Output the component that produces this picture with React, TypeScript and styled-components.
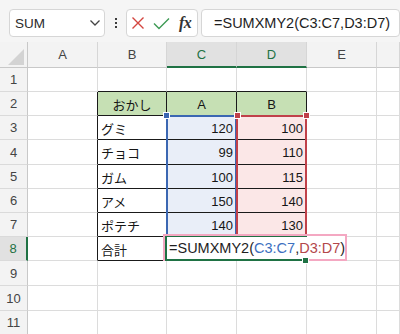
import React from 'react';
import styled, { createGlobalStyle } from 'styled-components';

const Global = createGlobalStyle`
  html, body { margin: 0; padding: 0; background: #fff; overflow: hidden; }
  #root { width: 400px; height: 334px; overflow: hidden; }
`;

const GREEN = '#1f7244';
const GRID = '#dcdcdc';
const BLACK = '#1a1a1a';
const HEAD_BG = '#f3f3f3';
const HEAD_ACTIVE = '#e1e1e1';
const HEAD_LINE = '#c8c8c8';

const Page = styled.div`
  width: 400px;
  height: 334px;
  display: flex;
  flex-direction: column;
  font-family: "Liberation Sans", "Noto Sans CJK JP", sans-serif;
`;

const Toolbar = styled.div`
  height: 42px;
  box-sizing: border-box;
  padding: 9px 0 5px 9px;
  display: flex;
  align-items: stretch;
  background: #f5f5f5;
`;

const Box = styled.div<{ $w?: number }>`
  box-sizing: border-box;
  background: #fff;
  border: 1px solid #d6d6d6;
  border-radius: 4px;
  display: flex;
  align-items: center;
  ${p => (p.$w ? `width: ${p.$w}px;` : 'flex: 1;')}
`;

const NameText = styled.span`
  font-size: 13.5px;
  color: #2b2b2b;
  margin-left: 5px;
  flex: 1;
`;

const Chevron = styled.svg`
  margin-right: 3px;
`;

const Dots = styled.div`
  width: 21px;
  display: flex;
  flex-direction: column;
  align-items: center;
  justify-content: center;
  gap: 2px;
  & > i {
    width: 2px;
    height: 2px;
    background: #3c3c3c;
    display: block;
  }
`;

const IconSlot = styled.div<{ $ml: number }>`
  margin-left: ${p => p.$ml}px;
  display: flex;
  align-items: center;
`;

const Fx = styled.span`
  font-family: "Liberation Serif", serif;
  font-style: italic;
  font-weight: bold;
  font-size: 16px;
  color: #333;
  margin-left: 9px;
  letter-spacing: -0.5px;
`;

const FormulaText = styled.span`
  font-size: 14.5px;
  color: #1e1e1e;
  margin-left: 12px;
  white-space: nowrap;
`;

const Gap = styled.div`
  width: 3px;
`;

const COLS = [28, 70, 69, 70, 70, 70];
const ROWS = [26, 24, 24, 24, 25, 24, 24, 24, 24, 25, 25, 24];

const Sheet = styled.div`
  position: relative;
  display: grid;
  grid-template-columns: ${COLS.map(c => c + 'px').join(' ')} 1fr;
  grid-template-rows: ${ROWS.map(r => r + 'px').join(' ')};
  flex: 1;
  overflow: hidden;
`;

const Corner = styled.div`
  box-sizing: border-box;
  background: ${HEAD_BG};
  border-right: 1px solid ${HEAD_LINE};
  border-bottom: 1px solid ${HEAD_LINE};
  display: flex;
  align-items: flex-end;
  justify-content: flex-end;
  padding: 0 3px 2px 0;
`;

const ColHead = styled.div<{ $active?: boolean }>`
  box-sizing: border-box;
  background: ${p => (p.$active ? HEAD_ACTIVE : HEAD_BG)};
  border-right: 1px solid #d6d6d6;
  border-bottom: ${p => (p.$active ? `2px solid ${GREEN}` : `1px solid ${HEAD_LINE}`)};
  display: flex;
  align-items: center;
  justify-content: center;
  font-size: 13px;
  color: ${p => (p.$active ? GREEN : '#444')};
  padding-top: ${p => (p.$active ? 1 : 0)}px;
`;

const RowHead = styled.div<{ $active?: boolean }>`
  box-sizing: border-box;
  background: ${p => (p.$active ? HEAD_ACTIVE : HEAD_BG)};
  border-right: ${p => (p.$active ? `2px solid ${GREEN}` : `1px solid ${HEAD_LINE}`)};
  border-bottom: 1px solid #dadada;
  display: flex;
  align-items: center;
  justify-content: center;
  font-size: 13px;
  color: ${p => (p.$active ? GREEN : '#444')};
`;

type Align = 'left' | 'center' | 'right';

const Cell = styled.div<{ $r?: string; $b?: string; $bg?: string; $align?: Align; $span?: number }>`
  box-sizing: border-box;
  grid-column: span ${p => p.$span ?? 1};
  border-right: 1px solid ${p => p.$r ?? GRID};
  border-bottom: 1px solid ${p => p.$b ?? GRID};
  background: ${p => p.$bg ?? '#fff'};
  display: flex;
  align-items: center;
  justify-content: ${p => (p.$align === 'right' ? 'flex-end' : p.$align === 'center' ? 'center' : 'flex-start')};
  padding: 1px 3px 0 3px;
  font-size: 13px;
  color: #161616;
  white-space: nowrap;
  overflow: hidden;
`;

const RangeBox = styled.div<{ $c: string }>`
  position: absolute;
  box-sizing: border-box;
  border: 2px solid ${p => p.$c};
  pointer-events: none;
`;

const Handle = styled.div<{ $c: string }>`
  position: absolute;
  width: 5px;
  height: 5px;
  background: ${p => p.$c};
  outline: 1px solid #fff;
`;

const Editor = styled.div`
  position: absolute;
  box-sizing: border-box;
  border: 2px solid #f4a8c2;
  background: #fff;
  display: flex;
  align-items: center;
  padding: 1px 0 0 4px;
  font-size: 14.5px;
  color: #1e1e1e;
  white-space: nowrap;
`;

const Ref = styled.span<{ $c: string }>`
  color: ${p => p.$c};
`;

const ActiveBorder = styled.div`
  position: absolute;
  box-sizing: border-box;
  border-left: 2px solid ${GREEN};
  border-top: 1px solid ${GREEN};
  border-bottom: 2px solid ${GREEN};
`;

const BLUE = '#3b67b2';
const RED = '#c0414a';
const BLUE_FILL = '#e9eef8';
const RED_FILL = '#fbe7e7';
const HEAD_FILL = '#c6e0b4';

const colX = (i: number) => COLS.slice(0, i).reduce((a, b) => a + b, 0);
const rowY = (i: number) => ROWS.slice(0, i).reduce((a, b) => a + b, 0);

type CellDef = { text?: string; r?: string; b?: string; bg?: string; align?: Align; span?: number };

const names = ['グミ', 'チョコ', 'ガム', 'アメ', 'ポテチ'];
const colA = [120, 99, 100, 150, 140];
const colB = [100, 110, 115, 140, 130];

function buildRow(row: number): CellDef[] {
  // columns A..F (F takes remaining)
  const cells: CellDef[] = [{}, {}, {}, {}, {}, {}];
  if (row === 1) {
    cells[1].b = BLACK;
    cells[2].b = BLACK;
    cells[3].b = BLACK;
  }
  if (row >= 2 && row <= 8) {
    cells[0].r = BLACK;
    cells[1] = { ...cells[1], r: BLACK, b: BLACK, align: 'left' };
    cells[2] = { ...cells[2], r: BLACK, b: BLACK, align: 'right' };
    cells[3] = { ...cells[3], r: BLACK, b: BLACK, align: 'right' };
  }
  if (row === 2) {
    cells[1] = { ...cells[1], text: 'おかし', bg: HEAD_FILL, align: 'center' };
    cells[2] = { ...cells[2], text: 'A', bg: HEAD_FILL, align: 'center' };
    cells[3] = { ...cells[3], text: 'B', bg: HEAD_FILL, align: 'center' };
  }
  if (row >= 3 && row <= 7) {
    const k = row - 3;
    cells[1].text = names[k];
    cells[2] = { ...cells[2], text: String(colA[k]), bg: BLUE_FILL };
    cells[3] = { ...cells[3], text: String(colB[k]), bg: RED_FILL };
  }
  if (row === 8) {
    cells[1].text = '合計';
    cells[2] = { ...cells[2], span: 2 };
    cells.splice(3, 1);
  }
  return cells;
}

const Triangle = () => (
  <svg width="16" height="16" viewBox="0 0 16 16">
    <polygon points="16,0 16,16 0,16" fill="#d3d3d3" />
  </svg>
);

export default function App() {
  const letters = ['A', 'B', 'C', 'D', 'E', ''];
  const rows = Array.from({ length: 11 }, (_, i) => i + 1);
  const gridTop = 0;

  const cTop = rowY(3) - 1 + gridTop;
  const cHeight = rowY(8) - rowY(3) + 1;
  const cLeft = colX(3) - 1;
  const dLeft = colX(4) - 1;

  return (
    <Page>
      <Global />
      <Toolbar>
        <Box $w={96}>
          <NameText>SUM</NameText>
          <Chevron width="12" height="8" viewBox="0 0 12 8">
            <polyline points="1.5,1.5 6,6 10.5,1.5" fill="none" stroke="#444" strokeWidth="1.3" />
          </Chevron>
        </Box>
        <Dots>
          <i />
          <i />
          <i />
        </Dots>
        <Box $w={72}>
          <IconSlot $ml={4}>
            <svg width="14" height="14" viewBox="0 0 14 14">
              <path d="M1.5 1.5 L12.5 12.5 M12.5 1.5 L1.5 12.5" stroke="#d4453f" strokeWidth="1.4" fill="none" />
            </svg>
          </IconSlot>
          <IconSlot $ml={8}>
            <svg width="17" height="13" viewBox="0 0 17 13">
              <polyline points="1,6.5 6,11.5 16,1.5" fill="none" stroke="#3e9a55" strokeWidth="1.4" />
            </svg>
          </IconSlot>
          <Fx>fx</Fx>
        </Box>
        <Gap />
        <Box>
          <FormulaText>=SUMXMY2(C3:C7,D3:D7)</FormulaText>
        </Box>
      </Toolbar>
      <Sheet>
        <Corner>
          <Triangle />
        </Corner>
        {letters.map((l, i) => (
          <ColHead key={'h' + i} $active={l === 'C' || l === 'D'}>
            {l}
          </ColHead>
        ))}
        {rows.map(r => (
          <React.Fragment key={r}>
            <RowHead $active={r === 8}>{r}</RowHead>
            {buildRow(r).map((c, j) => (
              <Cell key={j} $r={c.r} $b={c.b} $bg={c.bg} $align={c.align} $span={c.span}>
                {c.text}
              </Cell>
            ))}
          </React.Fragment>
        ))}

        <RangeBox $c={BLUE} style={{ left: cLeft, top: cTop, width: 71, height: cHeight }} />
        <RangeBox $c={RED} style={{ left: dLeft, top: cTop, width: 71, height: cHeight }} />
        <Handle $c={BLUE} style={{ left: cLeft - 2, top: cTop - 2 }} />
        <Handle $c={RED} style={{ left: dLeft - 1, top: cTop - 2 }} />
        <Handle $c={RED} style={{ left: dLeft + 68, top: cTop - 2 }} />

        <Editor style={{ left: cLeft - 3, top: rowY(8) - 3, width: 184, height: 27 }}>
          =SUMXMY2(<Ref $c="#3d70bf">C3:C7</Ref>,<Ref $c="#b3474a">D3:D7</Ref>)
        </Editor>
        <ActiveBorder style={{ left: cLeft - 1, top: rowY(8) - 1, width: 142, height: 25 }} />
        <Handle $c={GREEN} style={{ left: dLeft + 67, top: rowY(8) + 21 }} />
      </Sheet>
    </Page>
  );
}
